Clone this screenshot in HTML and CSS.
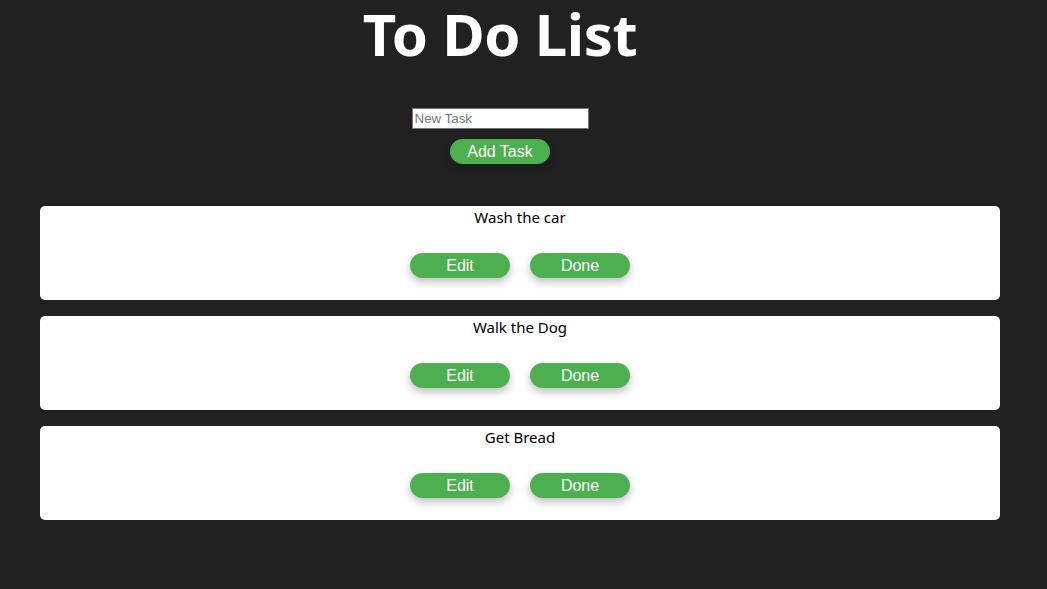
FILE: index.html
```html
<!DOCTYPE html>
<html>
<head>
<meta charset="utf-8">
<link rel="stylesheet" href="styles.css">
</head>
<body>
<div class="top">
  <h1 class="title">To Do List</h1>
  <input class="task-input" type="text" placeholder="New Task">
  <button class="btn add-btn">Add Task</button>
</div>
<div class="list">
  <div class="card">
    <div class="card-text">Wash the car</div>
    <div class="actions"><button class="btn">Edit</button><button class="btn">Done</button></div>
  </div>
  <div class="card">
    <div class="card-text">Walk the Dog</div>
    <div class="actions"><button class="btn">Edit</button><button class="btn">Done</button></div>
  </div>
  <div class="card">
    <div class="card-text">Get Bread</div>
    <div class="actions"><button class="btn">Edit</button><button class="btn">Done</button></div>
  </div>
</div>
</body>
</html>
```
FILE: styles.css
```css
html, body {
  margin: 0;
  padding: 0;
  background: #212121;
}
body {
  font-family: "Noto Sans", "Open Sans", sans-serif;
}
.top {
  width: 1000px;
  display: flex;
  flex-direction: column;
  align-items: center;
}
.title {
  margin: 0;
  color: #fff;
  font-size: 58px;
  font-weight: 700;
  line-height: 68px;
  letter-spacing: -0.4px;
}
.task-input {
  margin-top: 40px;
  width: 177px;
  height: 21px;
  box-sizing: border-box;
  border: 1px solid #767676;
  padding: 1px 2px;
  font-family: "Liberation Sans", Arial, sans-serif;
  font-size: 13.33px;
  background: #fff;
}
.task-input::placeholder { color: #757575; }
.btn {
  width: 100px;
  height: 25px;
  border: none;
  border-radius: 13px;
  background: #4caf50;
  color: #fff;
  font-family: "Liberation Sans", Arial, sans-serif;
  font-size: 16px;
  padding: 0;
  box-shadow: 0 4px 8px rgba(0, 0, 0, 0.25);
}
.add-btn {
  margin-top: 10px;
}
.list {
  margin: 42px 47px 0 40px;
  display: flex;
  flex-direction: column;
  gap: 16px;
}
.card {
  background: #fff;
  border-radius: 5px;
  height: 94px;
  box-sizing: border-box;
  padding-top: 0;
  display: flex;
  flex-direction: column;
  align-items: center;
}
.card-text {
  font-size: 15px;
  line-height: 22px;
  color: #000;
}
.actions {
  margin-top: 25px;
  display: flex;
  gap: 20px;
}
```
